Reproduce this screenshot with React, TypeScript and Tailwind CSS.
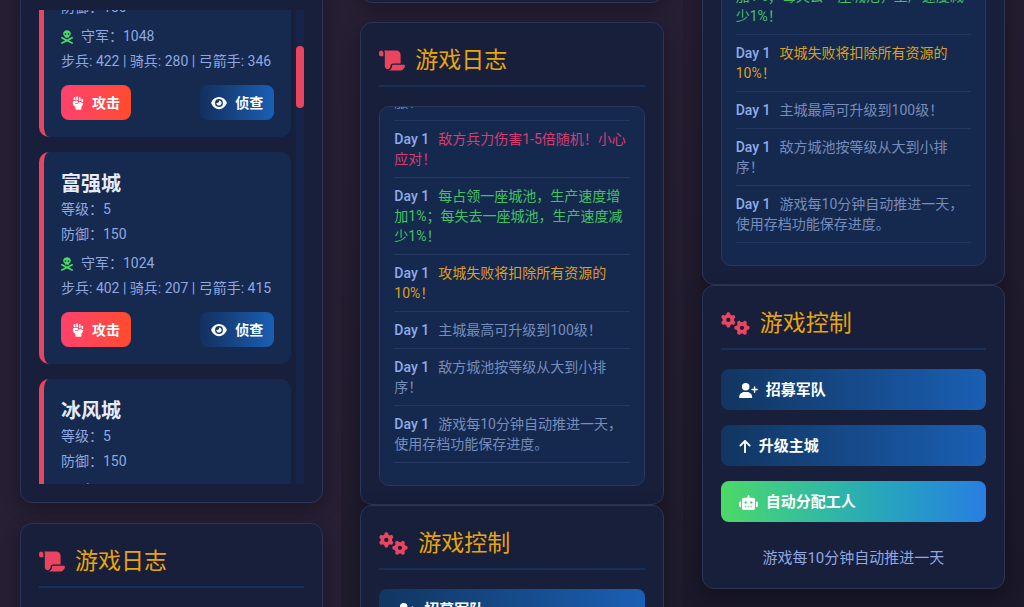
import type { ReactNode } from "react";
import type { IconType } from "react-icons";
import {
  FaArrowUp,
  FaEye,
  FaGears,
  FaHandFist,
  FaRobot,
  FaScroll,
  FaSkullCrossbones,
  FaUserPlus,
} from "react-icons/fa6";

const cities = [
  { name: "江南城", level: 5, defense: 150, troops: [422, 280, 346] },
  { name: "富强城", level: 5, defense: 150, troops: [402, 207, 415] },
  { name: "冰风城", level: 5, defense: 150, troops: [398, 251, 372] },
];

const logs = [
  { text: "占领全部十座敌方城池即可征服！", color: "text-[#768cbb]" },
  { text: "敌方兵力伤害1-5倍随机！小心应对！", color: "text-[#d63e72]" },
  {
    text: "每占领一座城池，生产速度增加1%；每失去一座城池，生产速度减少1%！",
    color: "text-[#45c163]",
  },
  { text: "攻城失败将扣除所有资源的10%！", color: "text-[#dd9f1c]" },
  { text: "主城最高可升级到100级！", color: "text-[#768cbb]" },
  { text: "敌方城池按等级从大到小排序！", color: "text-[#768cbb]" },
  {
    text: "游戏每10分钟自动推进一天，使用存档功能保存进度。",
    color: "text-[#768cbb]",
  },
];

const Card = ({
  children,
  className = "",
}: {
  children?: ReactNode;
  className?: string;
}) => (
  <section
    className={`shrink-0 rounded-xl border border-[#2a3557] bg-[#181f3b] px-[18px] pb-[18px] shadow-[0_6px_18px_rgba(0,0,0,0.3)] ${className}`}>
    {children}
  </section>
);

const CardTitle = ({ icon, text }: { icon: ReactNode; text: string }) => (
  <h2 className="mb-[19px] flex items-center gap-[10px] border-b-2 border-[#16305a] pb-[6px] text-[23px] leading-[37px] text-[#e8a50c]">
    {icon}
    {text}
  </h2>
);

const CityCard = ({ city }: { city: (typeof cities)[number] }) => {
  const [infantry, cavalry, archers] = city.troops;
  return (
    <li className="rounded-[10px] border-l-[5px] border-[#e94560] bg-[#16294f] px-[17px] pt-5 pb-[17px] text-sm leading-[25px] text-[#8fa8e0]">
      <h3 className="text-xl leading-[25px] font-bold text-[#e6ebf8]">
        {city.name}
      </h3>
      <p>等级：{city.level}</p>
      <p>防御：{city.defense}</p>
      <p className="mt-1 flex items-center gap-2">
        <FaSkullCrossbones className="h-[14px] w-3 text-[#4cd964]" />
        守军：{infantry + cavalry + archers}
      </p>
      <p className="whitespace-nowrap">
        步兵: {infantry} | 骑兵: {cavalry} | 弓箭手: {archers}
      </p>
      <div className="mt-[11px] flex justify-between font-bold text-white">
        <button className="flex h-[35px] items-center gap-2 rounded-lg bg-linear-to-r from-[#ff416c] to-[#ff4b2b] px-[11px] pt-px">
          <FaHandFist className="h-[14px] w-3" />
          攻击
        </button>
        <button className="flex h-[35px] items-center gap-2 rounded-lg bg-linear-to-r from-[#12305e] to-[#1a5fb4] px-[11px] pt-px">
          <FaEye className="h-[14px] w-4" />
          侦查
        </button>
      </div>
    </li>
  );
};

const CityPanel = () => (
  <Card className="-mt-5 pt-[29px]">
    <div className="flex h-[474px] gap-[5px] overflow-hidden">
      <ul className="-mt-[85px] flex flex-1 flex-col gap-[15px]">
        {cities.map((city) => (
          <CityCard key={city.name} city={city} />
        ))}
      </ul>
      <div className="w-2 bg-[#172449] pt-9">
        <div className="h-[62px] rounded bg-[#e94560]"></div>
      </div>
    </div>
  </Card>
);

const LogPanel = () => (
  <Card className="pt-[19px]">
    <CardTitle
      icon={<FaScroll className="h-[23px] w-[26px] text-[#e94560]" />}
      text="游戏日志"
    />
    <ul className="flex h-[380px] flex-col justify-end overflow-hidden rounded-[10px] border border-[#26385f] bg-[#15294f] px-[14px] pb-[22px] text-sm leading-5">
      {logs.map((log) => (
        <li
          key={log.text}
          className={`shrink-0 border-b border-[#26375f] py-2 ${log.color}`}>
          <span className="mr-[9px] font-medium text-[#8fabe8]">Day 1</span>
          {log.text}
        </li>
      ))}
    </ul>
  </Card>
);

const ControlButton = ({
  icon: Icon,
  text,
  iconSize,
  className,
}: {
  icon: IconType;
  text: string;
  iconSize: string;
  className: string;
}) => (
  <button
    className={`flex h-[41px] items-center gap-2 rounded-lg bg-linear-to-r px-[18px] pt-px text-[15px] font-bold text-white ${className}`}>
    <Icon className={iconSize} />
    {text}
  </button>
);

const ControlPanel = () => (
  <Card className="pt-[19px]">
    <CardTitle
      icon={<FaGears className="h-[23px] w-[29px] text-[#e94560]" />}
      text="游戏控制"
    />
    <div className="flex flex-col gap-[15px]">
      <ControlButton
        icon={FaUserPlus}
        text="招募军队"
        iconSize="h-[15px] w-[19px]"
        className="from-[#113661] to-[#1a5fb4]"
      />
      <ControlButton
        icon={FaArrowUp}
        text="升级主城"
        iconSize="h-[15px] w-3"
        className="from-[#113661] to-[#1a5fb4]"
      />
      <ControlButton
        icon={FaRobot}
        text="自动分配工人"
        iconSize="h-[15px] w-[19px]"
        className="from-[#4cd964] to-[#2a7de1]"
      />
    </div>
    <p className="mt-6 text-center text-[15px] leading-6 text-[#8fa8e0]">
      游戏每10分钟自动推进一天
    </p>
  </Card>
);

const App = () => {
  return (
    <main className="grid h-screen grid-cols-3 overflow-hidden bg-[#1a1829] font-['Roboto','Noto_Sans_CJK_SC',sans-serif]">
      <div className="flex min-h-0 flex-col gap-5 overflow-hidden bg-[#271f34] pr-[18px] pl-5">
        <CityPanel />
        <LogPanel />
      </div>
      <div className="flex min-h-0 flex-col overflow-hidden bg-linear-to-b from-[#271f34] to-[#1e1b2c] px-[19px]">
        <Card className="-mt-[37px] mb-[19px] h-10" />
        <LogPanel />
        <ControlPanel />
      </div>
      <div className="flex min-h-0 flex-col justify-end overflow-hidden bg-linear-to-b from-[#241d31] to-[#1a1829] px-[19px] pb-[18px]">
        <LogPanel />
        <ControlPanel />
      </div>
    </main>
  );
};

export default App;
